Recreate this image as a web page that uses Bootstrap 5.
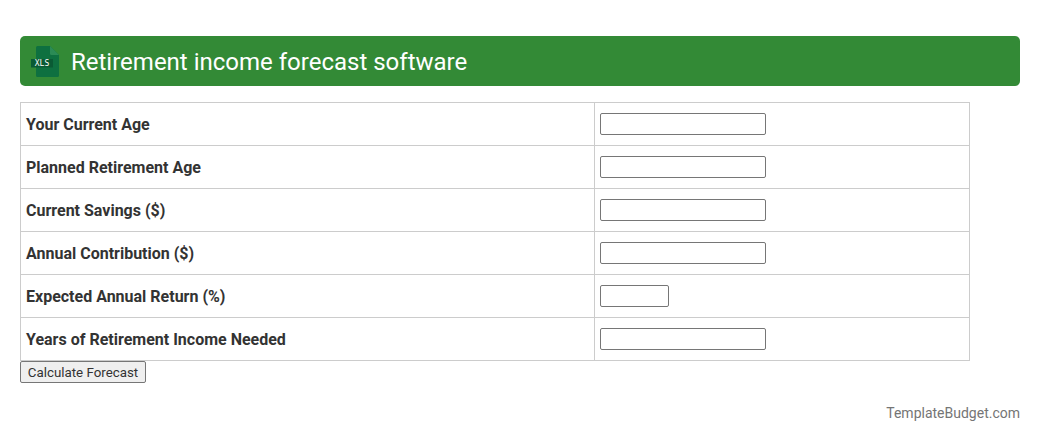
<!DOCTYPE html>
<html lang="en">
<head>
  <meta charset="UTF-8" />
  <meta name="viewport" content="width=device-width, initial-scale=1.0"/>
  <title>Retirement income forecast software</title>
  <link href="https://cdn.jsdelivr.net/npm/bootstrap@5.3.0/dist/css/bootstrap.min.css" rel="stylesheet" />
  <style>
      body { background: #fff; color: #333; font-family: Roboto, sans-serif; font-size: 16px; }
      .page-wrap { padding: 36px 20px 0; }
      .title-bar { background: #338a36; color: #fff; height: 50px; border-radius: 5px; padding-left: 10px; }
      .title-bar h1 { font-size: 24px; font-weight: 400; line-height: 50px; padding-top: 1px; margin: 0 0 0 11px; font-family: Roboto, sans-serif; }
      .forecast-table { width: 950px; margin: 16px 0 0; border-collapse: collapse; table-layout: fixed; }
      .forecast-table td { border: 1px solid #ccc; height: 43px; padding: 1px 5px 0; vertical-align: middle; }
      .forecast-table td:first-child { width: 574px; font-weight: 700; padding-top: 2px; }
      .forecast-table input { display: block; width: 166px; height: 22px; border: 1px solid #767676; border-radius: 2px; padding: 1px 2px; background: #fff; margin-top: -1px; }
      .forecast-table input.short-input { width: 69px; }
      .calc-btn { display: block; height: 22px; width: 126px; padding: 2px 0 0; font-size: 13.33px; line-height: 18px; color: #333; background: #efefef; border: 1px solid #767676; border-radius: 2px; font-family: Roboto, sans-serif; }
      .brand-line { color: #757575; font-size: 14px; line-height: 20px; margin-top: 20px; }
  </style>
</head>
<body>
  <div class="page-wrap">
    <div class="title-bar d-flex align-items-center">
      <svg width="30" height="31" viewBox="0 0 30 31" aria-hidden="true">
        <path d="M7.500 0H20L29 9V29.500Q29 31 27.500 31H7.500Q6 31 6 29.500V1.500Q6 0 7.500 0Z" fill="#0e7040"/>
        <path d="M20 0L29 9H21.500Q20 9 20 7.500Z" fill="#2b8b55"/>
        <rect x="1" y="13" width="22" height="8.500" fill="#0a5a34"/>
        <text x="12" y="20" text-anchor="middle" fill="#fff" font-size="8" font-family="DejaVu Sans Mono, monospace">XLS</text>
      </svg>
      <h1>Retirement income forecast software</h1>
    </div>
    <table class="forecast-table">
      <tr><td>Your Current Age</td><td><input type="text"></td></tr>
      <tr><td>Planned Retirement Age</td><td><input type="text"></td></tr>
      <tr><td>Current Savings ($)</td><td><input type="text"></td></tr>
      <tr><td>Annual Contribution ($)</td><td><input type="text"></td></tr>
      <tr><td>Expected Annual Return (%)</td><td><input class="short-input" type="text"></td></tr>
      <tr><td>Years of Retirement Income Needed</td><td><input type="text"></td></tr>
    </table>
    <button class="calc-btn" type="button">Calculate Forecast</button>
    <div class="brand-line text-end">TemplateBudget.com</div>
  </div>
  <script src="https://cdn.jsdelivr.net/npm/bootstrap@5.3.0/dist/js/bootstrap.bundle.min.js"></script>
</body>
</html>
